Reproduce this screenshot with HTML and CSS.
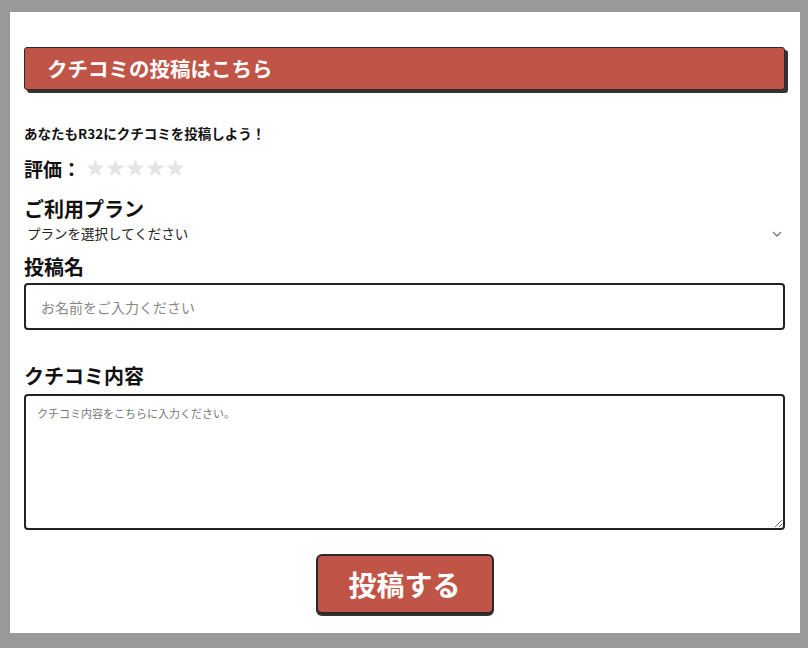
FILE: index.html
```html
<!DOCTYPE html>
<html lang="ja">
<head>
  <meta charset="UTF-8" />
  <meta name="viewport" content="width=device-width, initial-scale=1" />
  <title>クチコミ投稿</title>
  <link rel="stylesheet" href="styles.css">
</head>
<body>
  <div class="page">
    <h2 class="section-title">クチコミの投稿はこちら</h2>

    <form class="review-form">
      <p class="lead">あなたもR32にクチコミを投稿しよう！</p>

      <div class="rating">
        <span class="rating-label">評価：</span>
        <span class="stars">
          <span class="star">★</span><span class="star">★</span><span class="star">★</span><span class="star">★</span><span class="star">★</span>
        </span>
      </div>

      <label class="field-label" for="plan">ご利用プラン</label>
      <div class="select-wrap">
        <select id="plan">
          <option>プランを選択してください</option>
        </select>
        <svg class="chevron" width="10" height="6" viewBox="0 0 10 6"><path d="M1 1l4 4 4-4" fill="none" stroke="#777" stroke-width="1.3"/></svg>
      </div>

      <label class="field-label" for="name">投稿名</label>
      <input type="text" id="name" placeholder="お名前をご入力ください" />

      <label class="field-label label-body" for="body">クチコミ内容</label>
      <textarea id="body" placeholder="クチコミ内容をこちらに入力ください。"></textarea>

      <div class="actions">
        <button type="submit">投稿する</button>
      </div>
    </form>
  </div>
</body>
</html>
```

FILE: styles.css
```css
* {
  box-sizing: border-box;
}
body {
  margin: 0;
  padding: 12px 8px 15px 10px;
  background: #999;
  font-family: "Noto Sans CJK JP", "Noto Sans", sans-serif;
  color: #111;
}

.page {
  background: #fff;
  height: 621px;
  padding: 35px 15px 0 14px;
}

.section-title {
  margin: 0;
  height: 43px;
  padding: 0 22px;
  background: #bf5447;
  border: 1px solid #2a2a2a;
  border-radius: 3px;
  box-shadow: 3px 3px 0 #333;
  color: #fff;
  font-size: 20.5px;
  font-weight: bold;
  line-height: 41px;
}

.review-form {
  display: flex;
  flex-direction: column;
}

.lead {
  margin: 33px 0 0;
  font-size: 13.5px;
  font-weight: bold;
  line-height: 20px;
}

.rating {
  display: flex;
  align-items: center;
  margin-top: 12px;
  height: 26px;
}
.rating-label {
  font-size: 19px;
  font-weight: bold;
}
.stars {
  display: flex;
  margin-left: 4px;
}
.star {
  width: 20px;
  color: #e3e3e3;
  font-family: "DejaVu Sans", sans-serif;
  font-size: 23px;
  line-height: 26px;
  text-align: center;
}

.field-label {
  display: block;
  margin-top: 15px;
  font-size: 20px;
  font-weight: bold;
  line-height: 26px;
}

.select-wrap {
  position: relative;
  margin-top: 1px;
}
select {
  display: block;
  width: 100%;
  height: 20px;
  padding: 0 0 0 3px;
  border: none;
  background: transparent;
  appearance: none;
  font-family: inherit;
  font-size: 13.5px;
  color: #222;
  outline: none;
}
.chevron {
  position: absolute;
  right: 3px;
  top: 8px;
}

.select-wrap + .field-label {
  margin-top: 11px;
}

input[type=text] {
  margin-top: 3px;
  height: 47px;
  padding: 0 15px;
  border: 2px solid #222;
  border-radius: 4px;
  font-family: inherit;
  font-size: 14px;
  outline: none;
}
input::placeholder {
  color: #888;
}

.label-body {
  margin-top: 33px;
}

textarea {
  margin-top: 5px;
  height: 136px;
  padding: 9px 11px;
  border: 2px solid #222;
  border-radius: 4px;
  font-family: inherit;
  font-size: 11px;
  outline: none;
}
textarea::placeholder {
  color: #777;
}

.actions {
  display: flex;
  justify-content: center;
  margin-top: 24px;
}
button {
  width: 178px;
  height: 60px;
  background: #bf5447;
  border: 2px solid #2a2a2a;
  border-radius: 6px;
  box-shadow: 0 2px 0 #333;
  color: #fff;
  font-family: inherit;
  font-size: 28px;
  font-weight: bold;
  cursor: pointer;
}
```
